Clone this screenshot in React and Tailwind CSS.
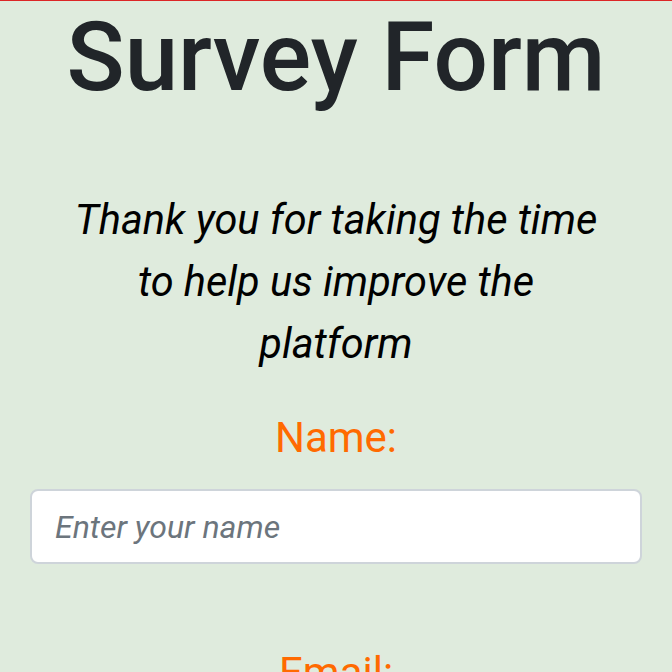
import React from 'react';

const App = () => {
    return (
        <div className="min-h-screen bg-[#dfebdd] border-t border-[#dc2626] font-['Roboto',sans-serif]">
            <div className="px-[30px]">
                <h1 className="text-center text-[96px] leading-[112px] font-medium text-[#212529]">Survey Form</h1>
                <p className="mt-[76px] text-center text-[41.5px] leading-[62px] italic text-black px-[36px]">
                    Thank you for taking the time to help us improve the platform
                </p>
                <form className="mt-[38px]">
                    <div className="mb-[84px]">
                        <label className="block text-center text-[42px] leading-[50px] text-[#ff6a00] mb-[26px]">Name:</label>
                        <input
                            type="text"
                            placeholder="Enter your name"
                            className="w-full h-[75px] bg-white rounded-[8px] border-2 border-[#ced4da] px-[23px] text-[32px] italic placeholder:text-[#6c757d] outline-none"
                        />
                    </div>
                    <div>
                        <label className="block text-center text-[42px] leading-[50px] text-[#ff6a00] mb-[30px]">Email:</label>
                    </div>
                </form>
            </div>
        </div>
    );
};

export default App;
